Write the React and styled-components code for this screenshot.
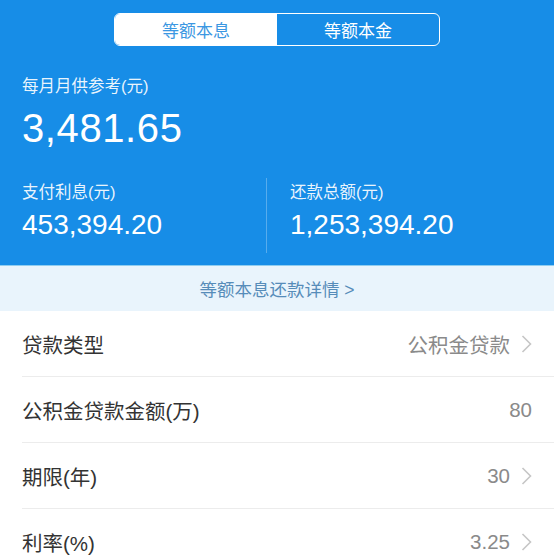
import React from 'react';
import styled, { createGlobalStyle } from 'styled-components';

const GlobalStyle = createGlobalStyle`
    html, body {
        margin: 0;
        padding: 0;
        background: #ffffff;
    }

    body {
        font-family: "Liberation Sans", "Noto Sans CJK SC", sans-serif;
        -webkit-font-smoothing: antialiased;
    }
`;

const Page = styled.div`
    width: 554px;
    height: 559px;
    overflow: hidden;
    background: #ffffff;
`;

const Header = styled.div`
    background: #178de7;
    color: #ffffff;
    padding: 13px 0 12px;
    display: flex;
    flex-direction: column;
`;

const Segmented = styled.div`
    align-self: center;
    display: flex;
    width: 326px;
    height: 33px;
    box-sizing: border-box;
    border: 1.5px solid #ffffff;
    border-radius: 6px;
    overflow: hidden;
`;

const Segment = styled.div`
    flex: 1;
    display: flex;
    align-items: center;
    justify-content: center;
    font-size: 17px;
    background: ${({ active }) => (active ? '#ffffff' : 'transparent')};
    color: ${({ active }) => (active ? '#3b97e2' : '#ffffff')};
`;

const Summary = styled.div`
    padding: 0 22px;
    margin-top: 29px;
`;

const Caption = styled.div`
    font-size: 16.5px;
    line-height: 22px;
    color: rgba(255, 255, 255, 0.92);
`;

const BigAmount = styled.div`
    font-size: 40px;
    line-height: 44px;
    letter-spacing: 0.6px;
    margin-top: 9px;
`;

const Stats = styled.div`
    display: grid;
    grid-template-columns: 244px 1fr;
    padding: 0 22px;
    margin-top: 28px;
`;

const StatCol = styled.div`
    padding: 3px 0 12px ${({ divided }) => (divided ? '23px' : '0')};
    border-left: ${({ divided }) => (divided ? '1px solid rgba(255, 255, 255, 0.28)' : 'none')};
`;

const StatAmount = styled.div`
    font-size: 28px;
    line-height: 32px;
    margin-top: 6px;
`;

const DetailBar = styled.div`
    height: 46px;
    background: #e9f4fc;
    border-top: 1px solid #8fcdf0;
    box-sizing: border-box;
    display: flex;
    align-items: center;
    justify-content: center;
    font-size: 17.5px;
    color: #568cb9;
`;

const Row = styled.div`
    padding-left: 22px;
`;

const RowInner = styled.div`
    height: 65px;
    display: flex;
    align-items: center;
    justify-content: space-between;
    padding-right: 22px;
    border-bottom: ${({ last }) => (last ? 'none' : '1px solid #ececec')};
`;

const Label = styled.span`
    font-size: 20.5px;
    color: #333333;
`;

const Value = styled.span`
    display: flex;
    align-items: center;
    gap: 11px;
    font-size: 20.5px;
    color: #8a8a8a;
`;

const Chevron = () => (
    <svg width="11" height="20" viewBox="0 0 11 20">
        <polyline points="1.5,2 9.5,10 1.5,18" fill="none" stroke="#c6c6c6" strokeWidth="1.6" />
    </svg>
);

const rows = [
    { label: '贷款类型', value: '公积金贷款', arrow: true },
    { label: '公积金贷款金额(万)', value: '80', arrow: false },
    { label: '期限(年)', value: '30', arrow: true },
    { label: '利率(%)', value: '3.25', arrow: true },
];

const App = () => (
    <React.Fragment>
        <GlobalStyle />
        <Page>
            <Header>
                <Segmented>
                    <Segment active>等额本息</Segment>
                    <Segment>等额本金</Segment>
                </Segmented>
                <Summary>
                    <Caption>每月月供参考(元)</Caption>
                    <BigAmount>3,481.65</BigAmount>
                </Summary>
                <Stats>
                    <StatCol>
                        <Caption>支付利息(元)</Caption>
                        <StatAmount>453,394.20</StatAmount>
                    </StatCol>
                    <StatCol divided>
                        <Caption>还款总额(元)</Caption>
                        <StatAmount>1,253,394.20</StatAmount>
                    </StatCol>
                </Stats>
            </Header>
            <DetailBar>等额本息还款详情 &gt;</DetailBar>
            {rows.map((row, i) => (
                <Row key={row.label}>
                    <RowInner last={i === rows.length - 1}>
                        <Label>{row.label}</Label>
                        <Value>
                            {row.value}
                            {row.arrow && <Chevron />}
                        </Value>
                    </RowInner>
                </Row>
            ))}
        </Page>
    </React.Fragment>
);

export default App;
